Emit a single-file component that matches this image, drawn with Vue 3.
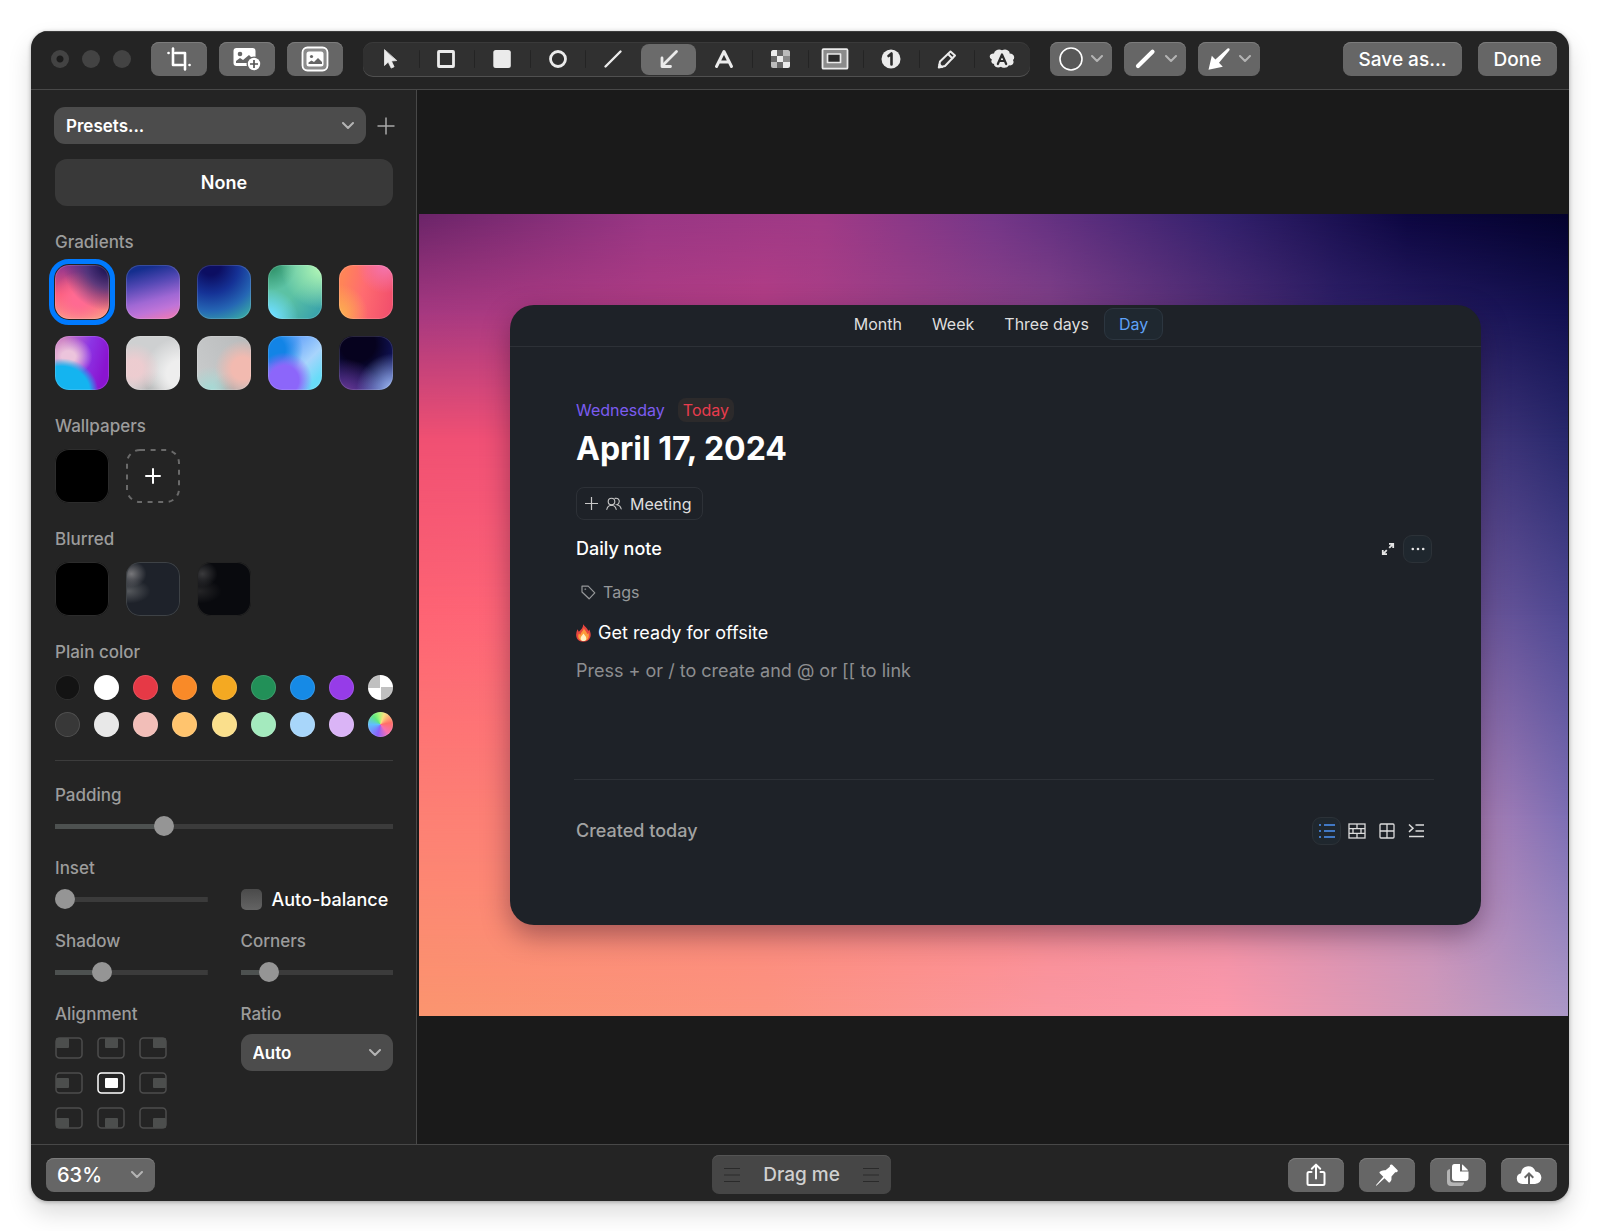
<script setup>
import { ref } from 'vue'

const tools = ['pointer', 'rect', 'rect-fill', 'ellipse', 'line', 'arrow', 'text', 'pixelate', 'spotlight', 'counter', 'pencil', 'redact']
const activeTool = ref('arrow')

const gradients = ['dusk', 'violet', 'ocean', 'mint', 'coral', 'prism', 'pearl', 'blush', 'sky', 'night']
const activeGradient = ref('dusk')

const colors = [
  'black', 'white', 'red', 'orange', 'amber', 'green', 'blue', 'purple', 'clear',
  'charcoal', 'light', 'rose', 'peach', 'lemon', 'aqua', 'azure', 'lilac', 'wheel'
]

const padding = ref(31)
const inset = ref(0)
const shadow = ref(28)
const corners = ref(14)
const balance = ref(false)

const alignments = [
  { id: 'top left', x: 1, y: 1 }, { id: 'top', x: 8, y: 1 }, { id: 'top right', x: 14, y: 1 },
  { id: 'left', x: 1, y: 6 }, { id: 'center', x: 8, y: 6 }, { id: 'right', x: 14, y: 6 },
  { id: 'bottom left', x: 1, y: 11 }, { id: 'bottom', x: 8, y: 11 }, { id: 'bottom right', x: 14, y: 11 }
]
const alignment = ref('center')

const tabs = ['Month', 'Week', 'Three days', 'Day']
const activeTab = ref('Day')

const fill = (v) => ({ '--fill': v + '%' })
</script>

<template>
  <div class="page">
    <main class="window">
      <header class="titlebar">
        <div class="lights"><i class="light edited"></i><i class="light"></i><i class="light"></i></div>

        <div class="actions">
          <button class="btn icon-btn" aria-label="Crop">
            <svg width="24" height="24" viewBox="0 0 24 24" fill="none" stroke="#fff" stroke-width="2.6" stroke-linecap="round" stroke-linejoin="round">
              <path d="M6 1.5V18h9.5M8.500 6H18v16.500" /><path d="M1.500 6h.1M22.500 18h.1" />
            </svg>
          </button>
          <button class="btn icon-btn" aria-label="Add image">
            <svg width="28" height="24" viewBox="0 0 28 24">
              <rect x="0.500" y="1" width="22" height="18" rx="3" fill="#fff" />
              <circle cx="7" cy="7" r="2.300" fill="#666" />
              <path d="M3 16v-2l4-3 3 2 6-5 5 5v3z" fill="#666" />
              <circle cx="21" cy="17" r="7.500" fill="#666" /><circle cx="21" cy="17" r="6.200" fill="#fff" />
              <path d="M21 13v8M17 17h8" stroke="#555" stroke-width="1.700" />
            </svg>
          </button>
          <button class="btn icon-btn" aria-label="Background">
            <svg width="28" height="26" viewBox="0 0 28 26">
              <rect x="1.500" y="1.500" width="25" height="23" rx="5" fill="#8b8b8b" stroke="#fff" stroke-width="1.800" />
              <rect x="5.500" y="5.500" width="17" height="15" rx="2.500" fill="#fff" />
              <circle cx="10.500" cy="10.500" r="1.600" fill="#666" />
              <path d="M7.500 18v-1.500l3-2 2.500 1.500 4-4 4 4v2z" fill="#666" />
            </svg>
          </button>
        </div>

        <div class="tools" role="toolbar" aria-label="Annotation tools">
          <button v-for="t in tools" :key="t" class="tool" :class="{ on: t === activeTool }" :aria-label="t" :aria-pressed="t === activeTool" @click="activeTool = t">
            <svg width="28" height="24" viewBox="0 0 28 24" fill="none" stroke="#ebebeb" stroke-width="2.800" stroke-linecap="round" stroke-linejoin="round">
              <path v-if="t === 'pointer'" d="M7.500 3v15.500l3.700-3.400 3 6 2.900-1.300-2.700-5.800 5-.4z" fill="#ebebeb" stroke="#ebebeb" stroke-width=".8" />
              <rect v-else-if="t === 'rect'" x="6.500" y="4.500" width="15" height="15" rx=".5" />
              <rect v-else-if="t === 'rect-fill'" x="5.300" y="3" width="17.500" height="18" rx="2.500" fill="#ebebeb" stroke="none" />
              <circle v-else-if="t === 'ellipse'" cx="14" cy="12" r="7.500" />
              <path v-else-if="t === 'line'" d="M6.500 19.500l15-15" stroke-width="2.400" />
              <g v-else-if="t === 'arrow'"><path d="M21.500 4.500L7.500 18.500" /><path d="M7 11v8.500h8.500" /></g>
              <path v-else-if="t === 'text'" d="M6.500 19.500L14 4.500l7.500 15M9.500 15h9" stroke-width="3" />
              <g v-else-if="t === 'pixelate'" stroke="none">
                <rect x="5" y="3" width="19" height="18" rx="2.500" fill="#666" />
                <path d="M7.500 3H11v6H5V5.500Q5 3 7.500 3zM11 9h6v6h-6zM17 15h7v3.500q0 2.500-2.500 2.500H17z" fill="#ebebeb" />
                <path d="M17 3h4.500Q24 3 24 5.500V9h-7zM5 15h6v6H7.500Q5 21 5 18.500z" fill="#bbb" />
                <path d="M17 9h7v6h-7z" fill="#888" />
              </g>
              <g v-else-if="t === 'spotlight'">
                <rect x="1.500" y="2.200" width="25" height="19.500" rx="1" fill="#8b8b8b" stroke-width="1.800" />
                <rect x="6.500" y="7" width="13" height="8.500" fill="#2c2c2c" stroke-width="1.700" />
              </g>
              <g v-else-if="t === 'counter'">
                <circle cx="14" cy="12" r="9.500" fill="#ebebeb" stroke="none" />
                <path d="M11.500 9l3-2.500v11" stroke="#2c2c2c" stroke-width="2.600" />
              </g>
              <g v-else-if="t === 'pencil'" stroke-width="2">
                <path d="M5.800 20.500l1.200-6L17.500 4.500l4.500 4-10 10.500z" /><path d="M15 7l4.300 4.200M6.500 17.500l2.500 2.600" />
              </g>
              <g v-else stroke="none">
                <path d="M8 3.500Q11 1.500 14 3.300q4-2 7 1 .8 1.200.6 2.200 4 .3 4.600 3.500.2 2-1.200 3 1.300 2 0 4-1.500 1.800-4 1.300-2 3-5.500 2.400-1.500 0-2.500-1-3 1.600-5.500 0Q5.800 18.500 6 17 3.500 16.500 3.300 14.500q0-1 .7-1.800-2.500-1-2.300-3.500Q2.300 6.300 6 6.500q.2-2 2-3z" fill="#ebebeb" />
                <path d="M9.800 17L14 7.500 18.200 17M11.500 14h5" stroke="#2c2c2c" stroke-width="2.200" />
              </g>
            </svg>
          </button>
        </div>

        <div class="actions">
          <button class="btn style-btn" aria-label="Shape color">
            <svg width="24" height="24" viewBox="0 0 24 24" fill="#585858" stroke="#fff" stroke-width="1.600"><circle cx="12" cy="12" r="11" /></svg>
            <svg class="chev" width="12" height="8" viewBox="0 0 12 8"><path d="M1 1l5 5 5-5" /></svg>
          </button>
          <button class="btn style-btn" aria-label="Line width">
            <svg width="24" height="24" viewBox="0 0 24 24" stroke="#fff" stroke-width="4.200" stroke-linecap="round"><path d="M5 19L19.500 4.800" /></svg>
            <svg class="chev" width="12" height="8" viewBox="0 0 12 8"><path d="M1 1l5 5 5-5" /></svg>
          </button>
          <button class="btn style-btn" aria-label="Arrow style">
            <svg width="24" height="24" viewBox="0 0 24 24" fill="#fff"><path d="M1.500 22.800L4.800 8.800l3.600 3.800L20.500 1.600q1.300-.7 2 .1.500.8-.2 1.800L12 15.800l3.800 3.900z" /></svg>
            <svg class="chev" width="12" height="8" viewBox="0 0 12 8"><path d="M1 1l5 5 5-5" /></svg>
          </button>
        </div>

        <div class="finish">
          <button class="btn save">Save as...</button>
          <button class="btn done">Done</button>
        </div>
      </header>

      <div class="body">
        <aside class="sidebar">
          <div class="presets">
            <div class="picker">
              <select aria-label="Presets"><option>Presets...</option></select>
              <svg class="chev" width="12" height="8" viewBox="0 0 12 8"><path d="M1 1l5 5 5-5" /></svg>
            </div>
            <button class="add" aria-label="Add preset">
              <svg width="18" height="18" viewBox="0 0 18 18" stroke="#a8a8a8" stroke-width="1.500"><path d="M9 .5v17M.5 9h17" /></svg>
            </button>
          </div>
          <button class="none">None</button>

          <h2>Gradients</h2>
          <div class="swatches">
            <button v-for="g in gradients" :key="g" class="swatch" :class="[g, { on: g === activeGradient }]" :aria-label="g" @click="activeGradient = g"></button>
          </div>

          <h2>Wallpapers</h2>
          <div class="swatches">
            <button class="swatch plain" aria-label="Desktop wallpaper"></button>
            <button class="swatch upload" aria-label="Add wallpaper">
              <svg width="54" height="54" viewBox="0 0 54 54" fill="none">
                <rect x="1" y="1" width="52" height="52" rx="13" stroke="#6a6a6a" stroke-width="2" stroke-dasharray="5 5.600" />
                <path d="M27 20v14M20 27h14" stroke="#fff" stroke-width="2" stroke-linecap="round" />
              </svg>
            </button>
          </div>

          <h2>Blurred</h2>
          <div class="swatches">
            <button class="swatch plain" aria-label="Blurred wallpaper"></button>
            <button class="swatch blur-slate" aria-label="Blurred capture"></button>
            <button class="swatch blur-dark" aria-label="Blurred capture, dark"></button>
          </div>

          <h2>Plain color</h2>
          <div class="colors">
            <button v-for="c in colors" :key="c" class="color" :class="'c-' + c" :aria-label="c"></button>
          </div>

          <div class="settings">
            <div class="field wide">
              <label for="padding">Padding</label>
              <input id="padding" v-model="padding" type="range" :style="fill(padding)" />
            </div>
            <div class="field">
              <label for="inset">Inset</label>
              <input id="inset" v-model="inset" type="range" :style="fill(inset)" />
            </div>
            <label class="check"><input v-model="balance" type="checkbox" />Auto-balance</label>
            <div class="field">
              <label for="shadow">Shadow</label>
              <input id="shadow" v-model="shadow" type="range" :style="fill(shadow)" />
            </div>
            <div class="field">
              <label for="corners">Corners</label>
              <input id="corners" v-model="corners" type="range" :style="fill(corners)" />
            </div>
            <div class="field">
              <span class="label">Alignment</span>
              <div class="aligns">
                <button v-for="a in alignments" :key="a.id" class="align" :class="{ on: a.id === alignment }" :aria-label="a.id" @click="alignment = a.id">
                  <svg width="28" height="22" viewBox="0 0 28 22">
                    <rect class="frame" x="1" y="1" width="26" height="20" rx="3.500" />
                    <rect class="mark" :x="a.x" :y="a.y" width="13" height="10" rx="1" />
                  </svg>
                </button>
              </div>
            </div>
            <div class="field ratio">
              <label for="ratio">Ratio</label>
              <div class="picker">
                <select id="ratio"><option>Auto</option></select>
                <svg class="chev" width="12" height="8" viewBox="0 0 12 8"><path d="M1 1l5 5 5-5" /></svg>
              </div>
            </div>
          </div>
        </aside>

        <section class="canvas">
          <div class="artboard">
            <i class="band b6"></i><i class="band b5"></i><i class="band b4"></i><i class="band b3"></i><i class="band b2"></i><i class="band b1"></i>
            <article class="card">
              <nav class="tabs">
                <button v-for="t in tabs" :key="t" class="tab" :class="{ on: t === activeTab }" @click="activeTab = t">{{ t }}</button>
              </nav>
              <div class="note">
                <div class="day"><span class="weekday">Wednesday</span><span class="today">Today</span></div>
                <h1>April 17, 2024</h1>
                <button class="meeting">
                  <svg width="13" height="13" viewBox="0 0 13 13" stroke="#c8c8c8" stroke-width="1.200"><path d="M6.500 0v13M0 6.500h13" /></svg>
                  <svg width="16" height="14" viewBox="0 0 16 14" fill="none" stroke="#c8c8c8" stroke-width="1.100" stroke-linecap="round">
                    <circle cx="5.500" cy="4.500" r="3.300" /><path d="M.8 12.500Q1.500 8.500 5.500 8.200q4 .3 4.700 4.300M9 1.400q3.800-.8 4.300 2.800-.1 2.700-2.400 3.500 3.600.8 4.300 4.300" />
                  </svg>
                  Meeting
                </button>
                <div class="row daily">
                  <h3>Daily note</h3>
                  <div class="row-icons">
                    <button class="mini" aria-label="Expand">
                      <svg width="14" height="14" viewBox="0 0 14 14" fill="none" stroke="#e4e4e4" stroke-width="1.800"><path d="M8 1.800h4.200V6M12 2L8.200 5.800M6 12.200H1.800V8M2 12l3.800-3.800" /></svg>
                    </button>
                    <button class="mini boxed" aria-label="More">
                      <svg width="14" height="4" viewBox="0 0 14 4" fill="#e4e4e4"><circle cx="1.800" cy="2" r="1.300" /><circle cx="7" cy="2" r="1.300" /><circle cx="12.200" cy="2" r="1.300" /></svg>
                    </button>
                  </div>
                </div>
                <div class="tags">
                  <svg width="15" height="15" viewBox="0 0 15 15" fill="none" stroke="#96989a" stroke-width="1.200" stroke-linejoin="round"><path d="M1 1.200h6.200l6.600 6.600-5.700 6L1 7z" /><path d="M4 4.200h.6" stroke-linecap="round" /></svg>
                  Tags
                </div>
                <p class="todo">
                  <svg width="15" height="18" viewBox="0 0 15 18">
                    <path d="M7.300.3c.8 2 4.400 4 5 6.700l.9-1.500c1.900 3.500 2.200 7.300-.2 10-3 3.100-8.700 2.900-11.300 0C-.4 13-.3 9 1.500 5.200l1.300 2.500C5 5.800 7 4 7.300.3z" fill="#e8453f" />
                    <path d="M7.800 4c.4 2 3.200 4 3.400 6 1-.2 1.200-1.300 1.200-1.300 1 3 .4 5.400-1 6.900-2 1.700-5.900 1.700-7.800 0-1.600-1.700-1.700-4.200-.6-6.400 0 0 .5 1.500 1.600 1.600C4.700 8 7.600 7 7.800 4z" fill="#fd9a3a" />
                    <path d="M7.500 9.500c.7 1.600 2.800 2.500 2.800 4.900 0 1.700-1.300 2.700-2.800 2.700s-2.900-1-2.900-2.700c0-2.300 2.200-3.300 2.900-4.900z" fill="#fff0c0" />
                  </svg>
                  Get ready for offsite
                </p>
                <p class="hint">Press + or / to create and @ or [[ to link</p>
                <div class="row created">
                  <h3>Created today</h3>
                  <div class="row-icons">
                    <button class="mini boxed" aria-label="List">
                      <svg width="18" height="16" viewBox="0 0 18 16" stroke="#4d94f5" stroke-width="1.500"><path d="M1 2h2M1 8h2M1 14h2M6 2h11M6 8h11M6 14h11" /></svg>
                    </button>
                    <button class="mini" aria-label="Masonry">
                      <svg width="18" height="16" viewBox="0 0 18 16" fill="none" stroke="#dcdcdc" stroke-width="1.300"><rect x="1" y="1" width="16" height="14" /><path d="M1 5.700h16M1 10.400h16M9 1v4.700M5 5.700v4.700M13 5.700v4.700M9 10.400V15" /></svg>
                    </button>
                    <button class="mini" aria-label="Grid">
                      <svg width="16" height="16" viewBox="0 0 16 16" fill="none" stroke="#dcdcdc" stroke-width="1.300"><rect x="1" y="1" width="14" height="14" rx="1" /><path d="M8 1v14M1 8h14" /></svg>
                    </button>
                    <button class="mini" aria-label="Indent">
                      <svg width="17" height="16" viewBox="0 0 17 16" fill="none" stroke="#dcdcdc" stroke-width="1.500"><path d="M1 1.500l4 3.700-4 3.700M7.500 2H16M7.500 8H16M1 13.500h15" /></svg>
                    </button>
                  </div>
                </div>
              </div>
            </article>
          </div>
        </section>
      </div>

      <footer class="footer">
        <div class="picker zoom">
          <select aria-label="Zoom"><option>63%</option></select>
          <svg class="chev" width="12" height="8" viewBox="0 0 12 8"><path d="M1 1l5 5 5-5" /></svg>
        </div>
        <button class="drag">
          <svg width="16" height="16" viewBox="0 0 16 16" stroke="#2a2a2a" stroke-width="1.200"><path d="M0 1.500h16M0 8h16M0 14.500h16" /></svg>
          Drag me
          <svg width="16" height="16" viewBox="0 0 16 16" stroke="#2a2a2a" stroke-width="1.200"><path d="M0 1.500h16M0 8h16M0 14.500h16" /></svg>
        </button>
        <div class="outputs">
          <button class="btn icon-btn" aria-label="Share">
            <svg width="22" height="24" viewBox="0 0 22 24" fill="none" stroke="#fff" stroke-width="2" stroke-linecap="round" stroke-linejoin="round"><path d="M6.500 9H4Q2.500 9 2.500 10.500v10Q2.500 22 4 22h14q1.500 0 1.500-1.500v-10Q19.500 9 18 9h-2.500M11 15.500V2M6.800 5.800L11 1.600l4.200 4.200" /></svg>
          </button>
          <button class="btn icon-btn" aria-label="Pin">
            <svg width="24" height="24" viewBox="0 0 24 24" fill="#fff"><path d="M15.500 1.800q.8-.8 1.700 0l5.200 5.200q.9.900 0 1.700-.9.700-2.200.6l-3.700 4.200q.6 3.600-1.500 5.700-.8.700-1.500 0l-4-4L1.400 22.800.9 22.300l7.400-8.500-3.500-3.500q-.8-.8 0-1.500 2.100-2 5.700-1.500l4.300-3.600q-.2-1.200.7-1.900z" /></svg>
          </button>
          <button class="btn icon-btn" aria-label="Copy">
            <svg width="24" height="24" viewBox="0 0 24 24"><path d="M4 6v10q0 3.500 3.500 3.500H18v1Q17 23 15 23H5Q1 23 1 19V9q0-2.500 3-3z" fill="#b5b5b5" /><path d="M8.500 1H14v7.500h8.500V15q0 3-3 3H9q-3 0-3-3V4q0-3 2.500-3z" fill="#fff" /><path d="M16 1.500q.8.200 1.500.9l4 4q.5.500.5 1h-6z" fill="#fff" /></svg>
          </button>
          <button class="btn icon-btn" aria-label="Upload">
            <svg width="26" height="20" viewBox="0 0 26 20"><path d="M6.500 19Q1 18.500.8 13.500.8 9 5 8.200 6 1.800 12 1.200q5.600-.2 7.500 5.200 5.500.6 5.900 6.200-.2 5.800-6.400 6.400z" fill="#fff" /><path d="M13 19.500V9M8.700 12.800L13 8.500l4.300 4.300" fill="none" stroke="#666" stroke-width="2" /></svg>
          </button>
        </div>
      </footer>
    </main>
  </div>
</template>

<style>
body { margin: 0; background: #fff; }
</style>

<style scoped>
* { box-sizing: border-box; }
.page {
  padding: 31px;
  font-family: Inter, "Liberation Sans", sans-serif;
  color: #fff;
}
button, select, input { font: inherit; color: inherit; margin: 0; }
button { border: 0; padding: 0; background: none; display: flex; align-items: center; justify-content: center; }
h1, h2, h3, p { margin: 0; }
svg { flex: none; display: block; }
.window {
  background: #242424;
  border-radius: 17px;
  overflow: hidden;
  box-shadow: 0 12px 24px rgba(0, 0, 0, .14), 0 1px 4px rgba(0, 0, 0, .3);
}
.chev { fill: none; stroke: #b4b4b4; stroke-width: 2; stroke-linecap: round; stroke-linejoin: round; }

.titlebar {
  display: flex;
  align-items: center;
  gap: 20px;
  height: 59px;
  padding: 0 12px 3px 20px;
  border-top: 1px solid #3c3c3c;
  border-bottom: 1px solid #484848;
}
.lights { display: flex; gap: 13px; }
.light { width: 18px; height: 18px; border-radius: 50%; background: #434343; }
.edited { background: radial-gradient(circle, #1c1c1c 3px, #434343 4px); }
.actions { display: flex; gap: 12px; }
.btn {
  height: 34px;
  border-radius: 8px;
  background: #666;
  box-shadow: inset 0 1px #7c7c7c;
  font-size: 19px;
  font-weight: 500;
}
.icon-btn { width: 56px; }
.style-btn { width: 62px; gap: 8px; }
.tools {
  display: flex;
  flex: 0 1 667px;
  height: 35px;
  padding: 2px 0;
  border-radius: 10px;
  background: #303030;
  box-shadow: inset 0 1px #3a3a3a, inset 0 -1px #505050;
}
.tool { flex: 1; border-radius: 8px; }
.tool + .tool { background: linear-gradient(#242424, #242424) left center / 1px 18px no-repeat; }
.tool + .tool.on { background: #6b6b6b; }
.tool.on + .tool { background: none; }
.finish { display: flex; gap: 16px; margin-left: auto; }
.save { width: 119px; }
.done { width: 79px; }

.body { display: flex; }
.sidebar {
  flex: none;
  width: 386px;
  padding: 17px 23px 15px 24px;
  border-right: 1px solid #484848;
}
.presets { display: flex; gap: 12px; margin: 0 -1px; }
.picker { display: grid; align-items: center; flex: 1; }
.picker select {
  grid-area: 1 / 1;
  width: 100%;
  height: 37px;
  padding: 0 12px;
  border: 0;
  border-radius: 11px;
  background: #4c4c4c;
  appearance: none;
  font-size: 17px;
  font-weight: 600;
}
.picker .chev { grid-area: 1 / 1; justify-self: end; margin-right: 12px; pointer-events: none; }
.add { width: 16px; }
.none {
  width: 100%;
  height: 47px;
  margin-top: 15px;
  border-radius: 12px;
  background: #393939;
  font-size: 18px;
  font-weight: 600;
}
h2, .field label, .label {
  display: block;
  font-size: 17px;
  line-height: 20px;
  font-weight: 500;
  color: #9c9c9c;
}
h2 { margin: 26px 0 13px; }
.swatches { display: grid; grid-template-columns: repeat(5, 54px); justify-content: space-between; row-gap: 17px; }
.swatch { height: 54px; border-radius: 14px; box-shadow: inset 0 0 0 1px rgba(255, 255, 255, .14); }
.swatch.on { outline: 5px solid #007aff; outline-offset: 1px; }
.upload { box-shadow: none; }
.dusk { background: radial-gradient(circle at 100% 0, #1a1250 5%, rgba(60, 50, 120, .8) 30%, transparent 60%), radial-gradient(circle at 45% 62%, #ff6a92 15%, transparent 60%), linear-gradient(#8e3490, #fb5c78 55%, #fc9c8a); }
.violet { background: linear-gradient(165deg, #142e8e 12%, #5348b4 36%, #a068d4 62%, #bf74d8 78%, #f67aae); }
.ocean { background: radial-gradient(circle at 25% 0, #0c0e62 15%, #153296 42%, #2566b4 68%, #36a2a8 90%); }
.mint { background: radial-gradient(circle at 100% 5%, #a8f0b4 8%, transparent 55%), radial-gradient(circle at 0 100%, #6cdcfc 10%, transparent 40%), radial-gradient(circle at 5% 0, #2a8c62, transparent 35%), linear-gradient(130deg, #5cc2a4 50%, #329cac); }
.coral { background: radial-gradient(circle at 85% 0, #f472a8 5%, transparent 40%), radial-gradient(circle at 0 90%, #fcb050, transparent 40%), linear-gradient(100deg, #ff8458 10%, #ff6c70 45%, #f04c6c); }
.prism { background: radial-gradient(ellipse 70% 65% at 12% 105%, #14b4f0 75%, transparent 98%), radial-gradient(ellipse at 25% 38%, #ecc4dc 12%, transparent 42%), linear-gradient(105deg, #c878c0 15%, #8c34e4 55%, #8a14d0 85%); }
.pearl { background: radial-gradient(circle at 15% 60%, rgba(240, 204, 208, .9) 15%, transparent 45%), radial-gradient(circle at 100% 70%, #eee 20%, transparent 55%), radial-gradient(circle at 50% 105%, #b4b6b6 8%, transparent 35%), #ced0d1; }
.blush { background: radial-gradient(circle at 85% 60%, #f2bab0 20%, transparent 50%), radial-gradient(circle at 25% 100%, #a8d8d4 5%, transparent 35%), radial-gradient(circle at 60% 105%, #aaa 8%, transparent 30%), linear-gradient(60deg, #cacccd, #b8babb); }
.sky { background: radial-gradient(circle at 30% 82%, #8c66fa 25%, transparent 48%), radial-gradient(circle at 8% 25%, #1284e6 20%, transparent 48%), linear-gradient(135deg, #6ca8fa 30%, #a8d4fc 60%, #68dcf8 85%); }
.night { background: radial-gradient(circle at 100% 100%, #a4c0f8, transparent 48%), radial-gradient(circle at 10% 115%, #783c98, transparent 50%), radial-gradient(circle at 35% 15%, #06021e 30%, #141a70 80%); }
.plain { background: #000; box-shadow: inset 0 0 0 1px #2c2c2c; }
.blur-slate { background: radial-gradient(ellipse at 10% 22%, #77777a, transparent 22%), radial-gradient(ellipse at 5% 54%, #55585c, transparent 30%), #1e222a; box-shadow: inset 0 0 0 1px #3e4246; }
.blur-dark { background: radial-gradient(ellipse at 10% 22%, #3a3a3c, transparent 22%), radial-gradient(ellipse at 5% 54%, #242426, transparent 30%), #090a0e; box-shadow: inset 0 0 0 1px #222; }
.colors { display: grid; grid-template-columns: repeat(9, 25px); justify-content: space-between; row-gap: 12px; }
.color { height: 25px; border-radius: 50%; box-shadow: inset 0 0 0 1px rgba(255, 255, 255, .12); }
.c-black { background: #131313; } .c-white { background: #fff; } .c-red { background: #e63946; }
.c-orange { background: #f98a28; } .c-amber { background: #f4a922; } .c-green { background: #229058; }
.c-blue { background: #168ae6; } .c-purple { background: #963ce8; }
.c-clear { background: conic-gradient(#fff 25%, #c0c0c0 0 50%, #fff 0 75%, #c0c0c0 0); }
.c-charcoal { background: #383838; } .c-light { background: #e8e8e8; } .c-rose { background: #f2beb8; }
.c-peach { background: #ffc46e; } .c-lemon { background: #fadf8c; } .c-aqua { background: #a4eabe; }
.c-azure { background: #a8d6fa; } .c-lilac { background: #dab4f6; }
.c-wheel { background: conic-gradient(from 20deg, #fce080, #ff7068 60deg, #f870b0 120deg, #8c60fc 175deg, #60c0fc 250deg, #60e880 300deg, #a0f878 330deg, #fce080); }

.settings {
  display: grid;
  grid-template-columns: 1fr 1fr;
  gap: 21px 33px;
  margin-top: 23px;
  padding-top: 24px;
  border-top: 1px solid #3c3c3c;
}
.wide { grid-column: span 2; }
.field input { margin-top: 11px; margin-bottom: 1px; }
input[type="range"] {
  display: block;
  width: 100%;
  height: 20px;
  appearance: none;
  background: linear-gradient(90deg, #4d5150 var(--fill), #3b3b3b 0) center / 100% 5px no-repeat;
  border-radius: 3px;
}
input[type="range"]::-webkit-slider-thumb {
  appearance: none;
  width: 20px;
  height: 20px;
  border-radius: 50%;
  background: #959595;
}
.check { display: flex; align-items: center; align-self: end; gap: 10px; height: 22px; font-size: 18px; font-weight: 500; white-space: nowrap; }
.check input { flex: none; width: 21px; height: 21px; appearance: none; border-radius: 5px; background: linear-gradient(#4a4a4a, #646464); }
.aligns { display: grid; grid-template-columns: repeat(3, 28px); gap: 13px 14px; margin-top: 13px; }
.frame { fill: none; stroke: #4c4c4c; stroke-width: 1.5; }
.mark { fill: #4c4e4d; }
.on .frame { stroke: #fff; }
.on .mark { fill: #fff; }
.ratio .picker { margin-top: 10px; }

.canvas { flex: 1; min-width: 0; padding: 124px 1px 0 2px; background: #1a1a1a; }
.artboard { display: grid; }
.band, .card { grid-area: 1 / 1; }
.b6 { background: linear-gradient(90deg, #fb956f, #fc9480 30%, #fb98a2 55%, #fd9aac 70%, #d29aba 87%, #ac98c8); }
.b5 { background: linear-gradient(90deg, #fd8074, #fd7f80 50%, #c48ab8 88%, #7c6eb4); mask-image: linear-gradient(#000 75%, transparent); }
.b4 { background: linear-gradient(90deg, #fe6474, #ff6a8c 50%, #8060a0 88%, #4e4892); mask-image: linear-gradient(#000 50%, transparent 75%); }
.b3 { background: linear-gradient(90deg, #f05072, #f0508c 40%, #5c4488 85%, #28286c); mask-image: linear-gradient(#000 28%, transparent 50%); }
.b2 { background: linear-gradient(90deg, #a43880, #b43e86 30%, #804088 55%, #2e2068 80%, #121050); mask-image: linear-gradient(#000 12%, transparent 28%); }
.b1 { background: linear-gradient(90deg, #6a2468, #983684 20%, #a03a86 35%, #743688 50%, #32206c 70%, #0c0640 86%, #04022c); mask-image: linear-gradient(#000, transparent 12%); }
.card {
  z-index: 1;
  margin: 91px 87px 91px 91px;
  padding-bottom: 80px;
  border-radius: 24px;
  background: #1e2228;
  box-shadow: 0 10px 28px rgba(20, 0, 30, .38);
}
.tabs { display: flex; justify-content: center; padding: 3px 0 6px 11px; border-bottom: 1px solid #2d3137; }
.tab { height: 32px; padding: 0 14px; border: 1px solid transparent; border-radius: 9px; font-size: 16px; font-weight: 400; color: #dedede; }
.tab.on { border-color: #2c3640; background: #1f2830; color: #5ea2f8; }
.note { padding: 51px 49px 0 66px; }
.day { display: flex; gap: 13px; font-size: 16px; line-height: 24px; }
.weekday { color: #7c5cf0; }
.today { padding: 0 5px; border-radius: 8px; background: #2c2a2b; color: #e83c4e; }
h1 { margin-top: 7px; font-size: 32px; line-height: 40px; font-weight: 700; }
.meeting { gap: 8px; height: 33px; margin-top: 18px; padding: 0 11px 0 8px; border: 1px solid #2d3137; border-radius: 8px; font-size: 16px; color: #dedede; }
.row { display: flex; align-items: center; justify-content: space-between; }
.daily { margin-top: 15px; }
h3 { font-size: 18px; line-height: 28px; font-weight: 500; }
.row-icons { display: flex; gap: 1px; }
.mini { width: 29px; height: 28px; border: 1px solid transparent; border-radius: 9px; }
.boxed { border-color: #2c3238; background: #1f272e; }
.tags { display: flex; align-items: center; gap: 7px; margin-top: 19px; padding-left: 5px; font-size: 16px; line-height: 20px; color: #96989a; }
.todo { display: flex; align-items: center; gap: 7px; margin-top: 20px; font-size: 18px; line-height: 22px; }
.hint { margin-top: 16px; font-size: 18px; line-height: 22px; color: #8d8e90; }
.created { margin-top: 97px; padding: 37px 3px 0 2px; border-top: 1px solid #2d3137; margin-left: -2px; margin-right: -2px; }
.created h3 { color: #a2a2a2; }

.footer {
  display: grid;
  grid-template-columns: 1fr auto 1fr;
  align-items: center;
  height: 57px;
  padding: 3px 12px 0 15px;
  border-top: 1px solid #484848;
}
.zoom { width: 109px; }
.zoom select { height: 34px; padding: 0 11px; border-radius: 8px; background: #666; box-shadow: inset 0 1px #7c7c7c; font-size: 20px; font-weight: 500; }
.drag { gap: 23px; height: 39px; padding: 0 12px; border-radius: 7px; background: #464646; box-shadow: inset 0 1px #545454; color: #d0d0d0; font-size: 19px; font-weight: 500; }
.outputs { display: flex; justify-content: flex-end; gap: 15px; }
</style>
